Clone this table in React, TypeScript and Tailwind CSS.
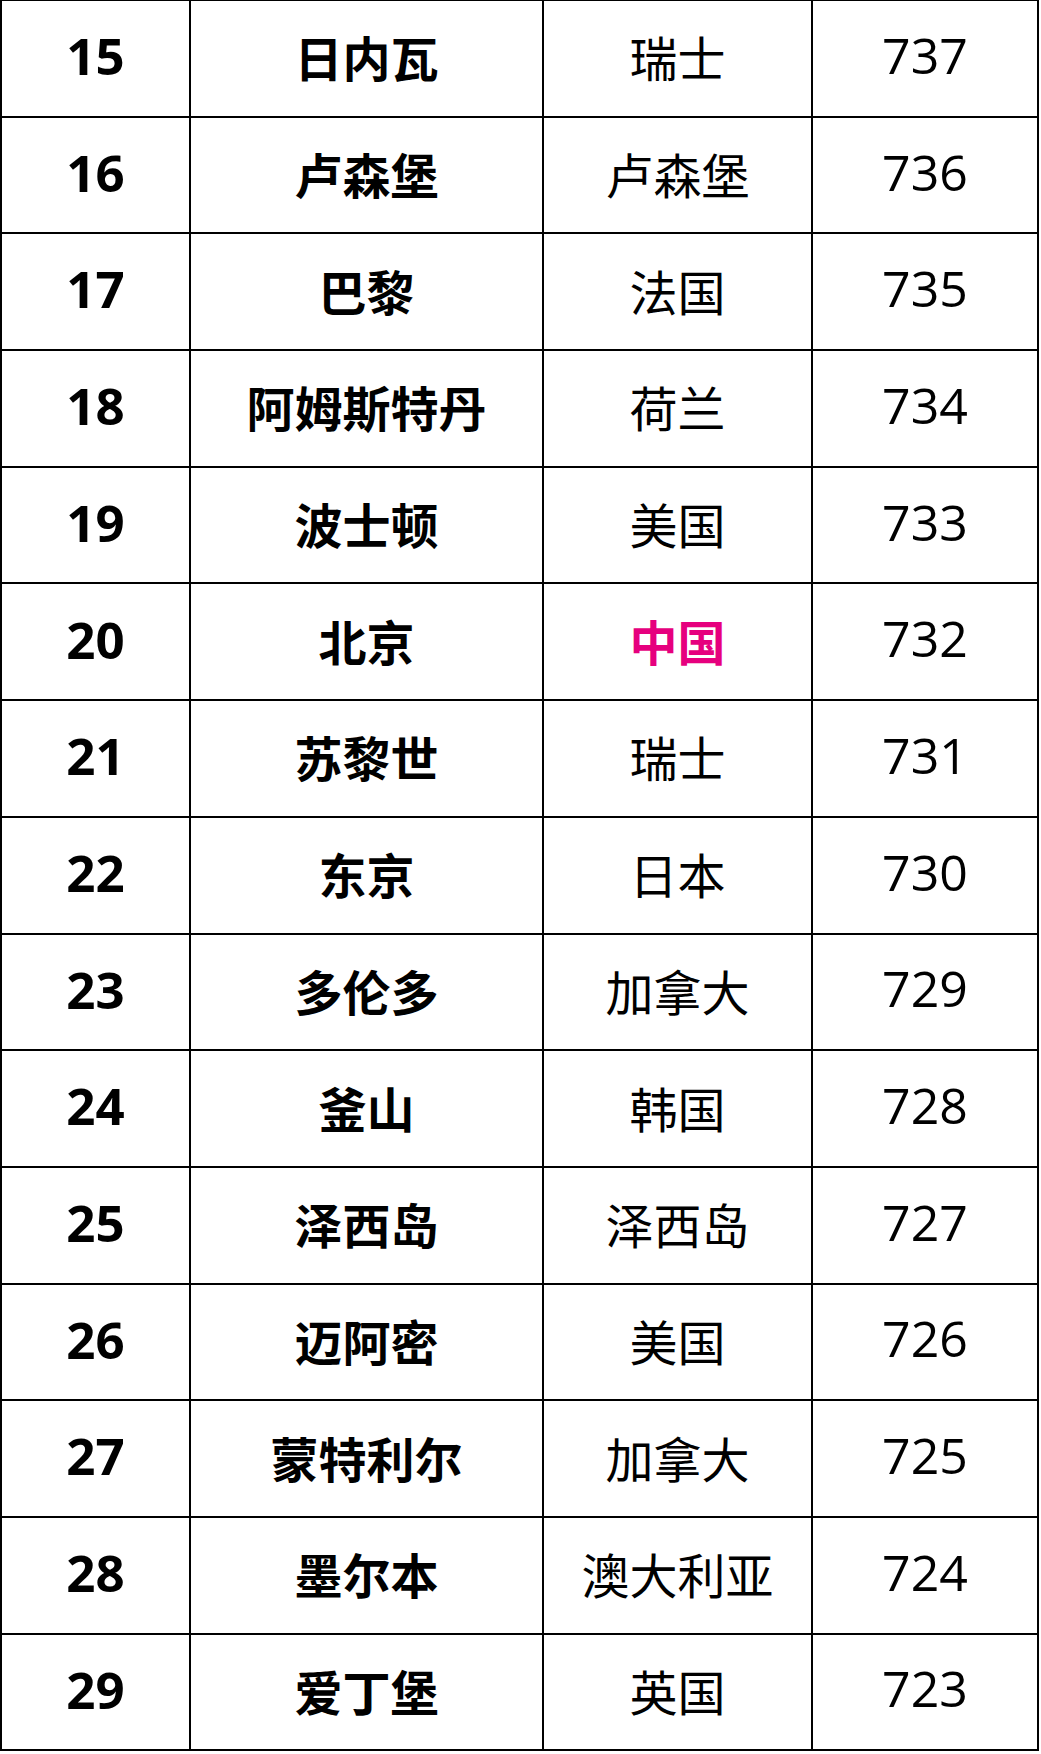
import React from "react";

const rows: [string, string, string, string][] = [
  ["15", "日内瓦", "瑞士", "737"],
  ["16", "卢森堡", "卢森堡", "736"],
  ["17", "巴黎", "法国", "735"],
  ["18", "阿姆斯特丹", "荷兰", "734"],
  ["19", "波士顿", "美国", "733"],
  ["20", "北京", "中国", "732"],
  ["21", "苏黎世", "瑞士", "731"],
  ["22", "东京", "日本", "730"],
  ["23", "多伦多", "加拿大", "729"],
  ["24", "釜山", "韩国", "728"],
  ["25", "泽西岛", "泽西岛", "727"],
  ["26", "迈阿密", "美国", "726"],
  ["27", "蒙特利尔", "加拿大", "725"],
  ["28", "墨尔本", "澳大利亚", "724"],
  ["29", "爱丁堡", "英国", "723"],
];

const latin = "font-['Open_Sans','Noto_Sans_CJK_SC',sans-serif]";
const cjk = "font-['Noto_Sans_CJK_SC',sans-serif]";

const App = () => {
  return (
    <div className="w-[1041px] h-[1754px] bg-white pr-[2px]">
      <div className="flex flex-col border-l-2 border-r-2 border-t border-black">
        {rows.map(([rank, city, country, score]) => (
          <div
            key={rank}
            className="grid grid-cols-[189px_353px_269px_1fr] h-[116.7px] border-b-2 border-black text-black"
          >
            <div className={`flex items-center justify-center pb-[6px] border-r-2 border-black text-[51px] font-bold ${latin}`}>
              {rank}
            </div>
            <div className={`flex items-center justify-center pb-[4px] border-r-2 border-black text-[48px] font-bold ${cjk}`}>
              {city}
            </div>
            <div
              className={`flex items-center justify-center pb-[4px] border-r-2 border-black text-[48px] ${cjk} ${
                country === "中国" ? "text-[#e6007e] font-bold" : "font-normal"
              }`}
            >
              {country}
            </div>
            <div className={`flex items-center justify-center pb-[6px] text-[50px] ${latin}`}>
              {score}
            </div>
          </div>
        ))}
      </div>
    </div>
  );
};

export default App;
